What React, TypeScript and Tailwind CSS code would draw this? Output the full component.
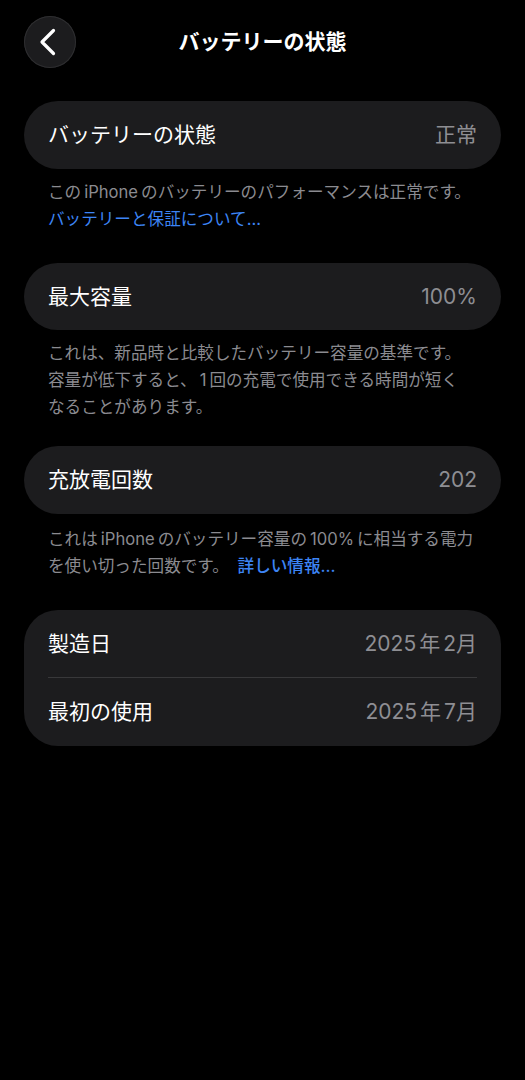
const font = {
  fontFamily: '"Inter", "Noto Sans CJK JP", sans-serif',
};

function Row({ label, value }: { label: string; value: React.ReactNode }) {
  return (
    <div className="flex h-[67.5px] items-center justify-between px-6">
      <span className="text-[21px] text-white">{label}</span>
      <span className="text-[21px] text-[#8e8e93]">{value}</span>
    </div>
  );
}

function Card({ children }: { children: React.ReactNode }) {
  return <div className="rounded-[34px] bg-[#1c1c1e]">{children}</div>;
}

function Caption({ children, className = '' }: { children: React.ReactNode; className?: string }) {
  return (
    <p className={`px-6 text-[16.6px] leading-[27px] text-[#8b8b90] ${className}`}>
      {children}
    </p>
  );
}

// latin words sit with a little air between the kana
function W({ children }: { children: React.ReactNode }) {
  return <span className="mx-[3px]">{children}</span>;
}

function Month({ year, month }: { year: string; month: string }) {
  return (
    <>
      {year}
      <span className="mx-[3px]">年</span>
      {month}月
    </>
  );
}

export default function App() {
  return (
    <div className="min-h-screen bg-black px-6 pt-4 pb-10" style={font}>
      {/* header */}
      <div className="relative flex h-[52px] items-center justify-center">
        <button className="absolute left-0 top-0 h-[52px] w-[52px] rounded-full bg-[#1c1c1e] shadow-[inset_0_0_0_1px_#2e2e30]">
          <svg width="52" height="52" viewBox="0 0 52 52" fill="none">
            <path
              d="M29.5 14.5 L18 26 L29.5 37.5"
              stroke="white"
              strokeWidth="3.2"
              strokeLinecap="round"
              strokeLinejoin="round"
            />
          </svg>
        </button>
        <h1 className="text-[21px] font-bold text-white">バッテリーの状態</h1>
      </div>

      <div className="mt-[33px]">
        <Card>
          <Row label="バッテリーの状態" value="正常" />
        </Card>
        <Caption className="pt-[10px]">
          この<W>iPhone</W>のバッテリーのパフォーマンスは正常です。
          <br />
          <span className="text-[#3d85f5]">バッテリーと保証について...</span>
        </Caption>
      </div>

      <div className="mt-[30px]">
        <Card>
          <Row label="最大容量" value="100%" />
        </Card>
        <Caption className="pt-[10px]">
          これは、新品時と比較したバッテリー容量の基準です。
          <br />
          容量が低下すると、<W>1</W>回の充電で使用できる時間が短く
          <br />
          なることがあります。
        </Caption>
      </div>

      <div className="mt-[25px]">
        <Card>
          <Row label="充放電回数" value="202" />
        </Card>
        <Caption className="pt-[12px]">
          これは<W>iPhone</W>のバッテリー容量の<W>100%</W>に相当する電力
          <br />
          を使い切った回数です。 <span className="ml-[4px] font-medium text-[#3d85f5]">詳しい情報...</span>
        </Caption>
      </div>

      <div className="mt-[30px]">
        <Card>
          <Row label="製造日" value={<Month year="2025" month="2" />} />
          <div className="mx-6 h-px bg-[#38383a]" />
          <Row label="最初の使用" value={<Month year="2025" month="7" />} />
        </Card>
      </div>
    </div>
  );
}
